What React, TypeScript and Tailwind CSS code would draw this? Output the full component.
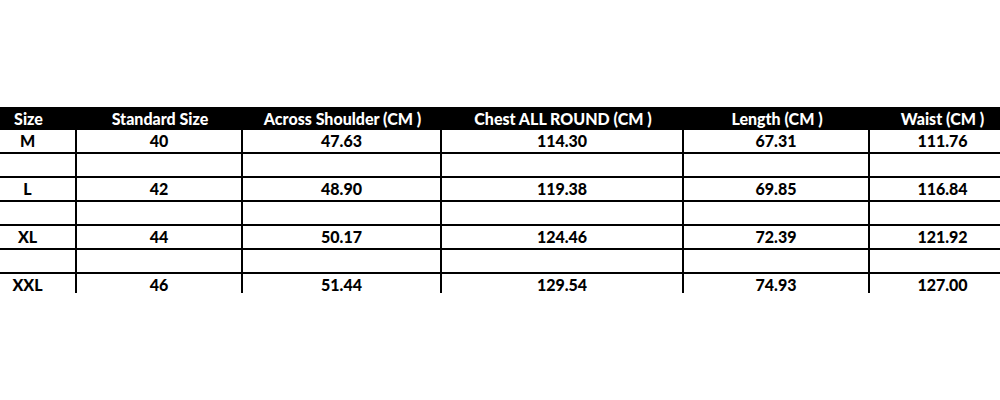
const headers = [
  "Size",
  "Standard Size",
  "Across Shoulder (CM )",
  "Chest ALL ROUND (CM )",
  "Length (CM )",
  "Waist (CM )",
];

const rows: string[][] = [
  ["M", "40", "47.63", "114.30", "67.31", "111.76"],
  [],
  ["L", "42", "48.90", "119.38", "69.85", "116.84"],
  [],
  ["XL", "44", "50.17", "124.46", "72.39", "121.92"],
  [],
  ["XXL", "46", "51.44", "129.54", "74.93", "127.00"],
];

const cols = "grid grid-cols-[97px_166px_199px_242px_186px_145px]";

export default function App() {
  return (
    <div className="w-full h-[400px] bg-white overflow-hidden pt-[107px] font-['Lato','Open_Sans',sans-serif] text-[16px] font-black">
      <div className="ml-[-20px] w-[1035px] h-[186px] overflow-hidden">
        <div className={`${cols} h-[23px] bg-black text-white`}>
          {headers.map((h) => (
            <div key={h} className="flex items-center justify-center leading-none">
              {h}
            </div>
          ))}
        </div>
        {rows.map((r, i) => (
          <div key={i} className={`${cols} h-[24px] border-b-2 border-black text-black`}>
            {headers.map((_, j) => (
              <div
                key={j}
                className={`flex items-center justify-center leading-none ${j < 5 ? "border-r-2 border-black" : ""}`}
              >
                {r[j] ?? ""}
              </div>
            ))}
          </div>
        ))}
      </div>
    </div>
  );
}
